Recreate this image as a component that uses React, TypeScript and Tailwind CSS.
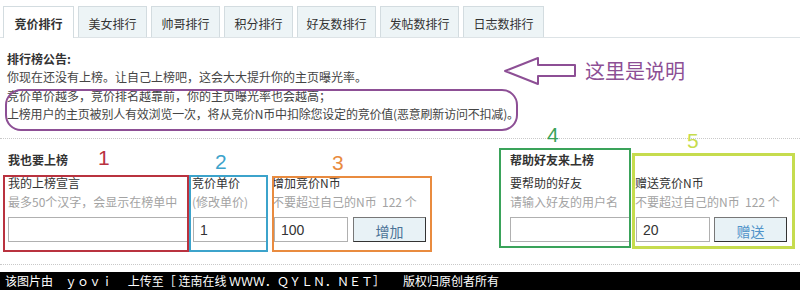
import type { ReactNode } from "react";

const tabs = ["竞价排行", "美女排行", "帅哥排行", "积分排行", "好友数排行", "发帖数排行", "日志数排行"];
const tabWidths = ["w-[71px]", "w-[69px]", "w-[69px]", "w-[69px]", "w-[79px]", "w-[79px]", "w-[81px]"];

interface FieldProps {
    label: string;
    hint: string;
    className?: string;
    mark?: ReactNode;
    children: ReactNode;
}

const Field = ({ label, hint, className = "", mark, children }: FieldProps) => (
    <div className={`relative ${className}`}>
        <div className="leading-[12px]">{label}</div>
        <div className="mt-[4px] leading-[18px] text-[#a3a3a3] whitespace-pre">{hint}</div>
        <div className="mt-[6px] flex gap-[4px]">{children}</div>
        {mark}
    </div>
);

const TextInput = ({ value = "", className = "" }: { value?: string; className?: string }) => (
    <input
        defaultValue={value}
        className={`h-[25px] border border-[#b0b0b0] px-[6px] text-[14px] font-['Liberation_Sans',sans-serif] text-[#333] outline-none ${className}`}
    />
);

const Button = ({ label, className = "" }: { label: string; className?: string }) => (
    <button className={`h-[25px] pt-[2px] bg-[#e8f2f6] border border-[#777] border-r-[#333] border-b-[#333] text-[14px] leading-none ${className}`}>
        {label}
    </button>
);

// annotation number drawn over the screenshot
const Num = ({ n, className }: { n: string; className: string }) => (
    <span className={`absolute pointer-events-none text-[21px] leading-[21px] font-['Liberation_Sans',sans-serif] ${className}`}>{n}</span>
);

export default function App() {
    return (
        <div className="w-[800px] h-[290px] bg-white overflow-hidden font-['Noto_Sans_CJK_SC',sans-serif] text-[12px] text-[#333]">
            {/* tabs */}
            <div className="flex gap-[4px] pl-[3px] pt-[6px] border-b border-[#dde3e6]">
                {tabs.map((t, i) => (
                    <div
                        key={t}
                        className={`${tabWidths[i]} flex items-center justify-center pt-[3px] border border-b-0 border-[#d3dce0] ${i === 0 ? "h-[32px] -mb-px bg-white font-bold" : "h-[31px] bg-[#edf4f6]"}`}
                    >
                        {t}
                    </div>
                ))}
            </div>

            {/* notice */}
            <div className="relative h-[101px] border-b border-dotted border-[#c9c9c9] pl-[7px] pt-[12px] leading-[18px] text-[#444]">
                <div className="font-bold text-[#333]">排行榜公告:</div>
                <p>你现在还没有上榜。让自己上榜吧，这会大大提升你的主页曝光率。</p>
                <div className="relative mt-px">
                    <p>竞价单价越多，竞价排名越靠前，你的主页曝光率也会越高；</p>
                    <p className="tracking-[-0.2px]">上榜用户的主页被别人有效浏览一次，将从竞价N币中扣除您设定的竞价值(恶意刷新访问不扣减)。</p>
                    <div className="absolute left-[-2px] top-[2px] w-[513px] h-[42px] border-2 border-[#8d4f95] rounded-[16px] pointer-events-none" />
                </div>
                <svg className="absolute left-[504px] top-[19px]" width="73" height="28" viewBox="0 0 73 28" fill="none">
                    <polygon points="1,14 34,1 34,8 71,8 71,19 34,19 34,27" stroke="#8d4f95" strokeWidth="2" strokeLinejoin="round" />
                </svg>
                <div className="absolute left-[585px] top-[23px] text-[20px] leading-[20px] text-[#8d4f95]">这里是说明</div>
            </div>

            {/* forms */}
            <div className="flex h-[126px] border-b border-dotted border-[#c9c9c9] pt-[12px]">
                <div className="pl-[8px]">
                    <div className="font-bold leading-[18px]">我也要上榜</div>
                    <div className="flex gap-[4px] mt-[8px]">
                        <Field
                            label="我的上榜宣言"
                            hint="最多50个汉字，会显示在榜单中"
                            className="w-[180px]"
                            mark={
                                <>
                                    <div className="absolute left-[-5px] top-[-2px] w-[186px] h-[77px] border-2 border-[#b9323f] pointer-events-none" />
                                    <Num n="1" className="left-[90px] top-[-30px] text-[#b9323f]" />
                                </>
                            }
                        >
                            <TextInput className="w-[180px]" />
                        </Field>
                        <Field
                            label="竞价单价"
                            hint="(修改单价)"
                            className="w-[76px]"
                            mark={
                                <>
                                    <div className="absolute left-[-3px] top-[-2px] w-[79px] h-[77px] border-2 border-[#3ca3cb] pointer-events-none" />
                                    <Num n="2" className="left-[23px] top-[-26px] text-[#3ca3cb]" />
                                </>
                            }
                        >
                            <TextInput value="1" className="w-[75px] ml-px" />
                        </Field>
                        <Field
                            label="增加竞价N币"
                            hint="不要超过自己的N币  122 个"
                            className="w-[154px]"
                            mark={
                                <>
                                    <div className="absolute left-0 top-[-1px] w-[160px] h-[76px] border-2 border-[#e98b3f] pointer-events-none" />
                                    <Num n="3" className="left-[60px] top-[-25px] text-[#e98b3f]" />
                                </>
                            }
                        >
                            <TextInput value="100" className="w-[74px] ml-[2px]" />
                            <Button label="增加" className="w-[73px] ml-px text-[#4a7396]" />
                        </Field>
                    </div>
                </div>

                <div className="relative ml-[84px]">
                    <div className="font-bold leading-[18px]">帮助好友来上榜</div>
                    <div className="flex gap-[5px] mt-[8px]">
                        <Field label="要帮助的好友" hint="请输入好友的用户名" className="w-[120px]">
                            <TextInput className="w-[120px]" />
                        </Field>
                        <Field
                            label="赠送竞价N币"
                            hint="不要超过自己的N币  122 个"
                            className="w-[155px]"
                            mark={
                                <>
                                    <div className="absolute left-[-3px] top-[-24px] w-[163px] h-[96px] border-[3px] border-[#c6dc4e] pointer-events-none" />
                                    <Num n="5" className="left-[52px] top-[-47px] text-[#c6dc4e]" />
                                </>
                            }
                        >
                            <TextInput value="20" className="w-[74px] ml-px" />
                            <Button label="赠送" className="w-[73px] text-[#4f93c9]" />
                        </Field>
                    </div>
                    <div className="absolute left-[-11px] top-[-3px] w-[132px] h-[100px] border-2 border-[#3aa35a] pointer-events-none" />
                    <Num n="4" className="left-[37px] top-[-27px] text-[#3aa35a]" />
                </div>
            </div>

            {/* footer */}
            <div className="mt-[7px] h-[18px] bg-black text-white leading-[18px] pl-[5px] whitespace-pre">
                该图片由　ｙｏｖｉ　 上传至［ 连南在线 ＷＷＷ．ＱＹＬＮ．ＮＥＴ］　　版权归原创者所有
            </div>
        </div>
    );
}
